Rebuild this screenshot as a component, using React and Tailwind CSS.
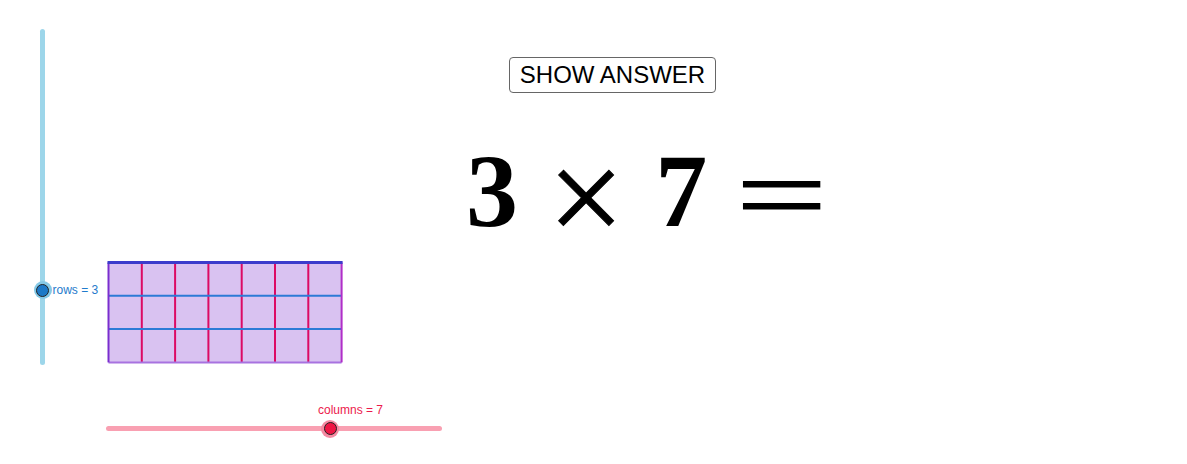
import React from "react";

const MIN = 1;
const MAX = 10;
const rows = 3;
const columns = 7;
const TRACK = 336;

// fraction of the track taken up by a slider value
const frac = (v) => (v - MIN) / (MAX - MIN);

function ArrayModel({ cols, rws }) {
  const x0 = 1.5;
  const y0 = 1.5;
  const cw = 33.3;
  const ch = 33.3;
  const w = cw * cols;
  const h = ch * rws;
  return (
    <svg width="238" height="106" viewBox="0 0 238 106" className="block">
      <rect x={x0} y={y0} width={w} height={h} fill="#d9c2f1" />
      {Array.from({ length: cols - 1 }, (_, i) => (
        <line key={`v${i}`} x1={x0 + cw * (i + 1)} y1={y0} x2={x0 + cw * (i + 1)} y2={y0 + h} stroke="#dc0a64" strokeWidth="2" />
      ))}
      {Array.from({ length: rws - 1 }, (_, i) => (
        <line key={`h${i}`} x1={x0} y1={y0 + ch * (i + 1)} x2={x0 + w} y2={y0 + ch * (i + 1)} stroke="#2c7ad6" strokeWidth="2" />
      ))}
      <line x1={x0} y1={y0 + h} x2={x0 + w} y2={y0 + h} stroke="#a872e0" strokeWidth="2" />
      <line x1={x0 + w} y1={y0} x2={x0 + w} y2={y0 + h} stroke="#b02ec8" strokeWidth="2" />
      <line x1={x0} y1={y0} x2={x0} y2={y0 + h} stroke="#7a2ecf" strokeWidth="2" />
      <line x1={x0 - 1} y1={y0} x2={x0 + w + 1} y2={y0} stroke="#3c3ccc" strokeWidth="3" />
    </svg>
  );
}

function Knob({ fill, halo }) {
  return (
    <div className={`w-[18px] h-[18px] rounded-full flex items-center justify-center ${halo}`}>
      <div className={`w-[13px] h-[13px] rounded-full border border-[#222] ${fill}`} />
    </div>
  );
}

function RowsSlider() {
  const top = TRACK * (1 - frac(rows));
  return (
    <div className="relative w-[5px] h-[336px] rounded-full bg-[#9dd6ea]">
      <div className="absolute left-[-6.5px] flex items-center gap-[1px]" style={{ top: top - 9 }}>
        <Knob fill="bg-[#1d79c7]" halo="bg-[#86c9e6]" />
        <span className="text-[12px] leading-none text-[#1f7bcc] whitespace-nowrap">rows = {rows}</span>
      </div>
    </div>
  );
}

function ColumnsSlider() {
  const left = TRACK * frac(columns);
  return (
    <div className="relative w-[336px] h-[5px] rounded-full bg-[#f9a0b2]">
      <div className="absolute top-[-6.5px]" style={{ left: left - 9 }}>
        <Knob fill="bg-[#ee1644]" halo="bg-[#f58aa2]" />
        <span className="absolute left-[-3px] top-[-16px] text-[12px] leading-none text-[#ec1a4c] whitespace-nowrap">columns = {columns}</span>
      </div>
    </div>
  );
}

export default function App() {
  return (
    <div className="relative w-[1187px] h-[464px] bg-white overflow-hidden font-['Liberation_Sans',Arial,sans-serif]">
      <div className="absolute left-[40px] top-[29px]">
        <RowsSlider />
      </div>

      <div className="absolute left-[107px] top-[261px]">
        <ArrayModel cols={columns} rws={rows} />
      </div>

      <div className="absolute left-[106px] top-[426px]">
        <ColumnsSlider />
      </div>

      <button className="absolute left-[509px] top-[57px] w-[207px] h-[36px] border border-[#666] rounded-[4px] bg-white text-[24px] leading-none text-black">
        SHOW ANSWER
      </button>

      <div className="absolute left-[466px] top-[113px] flex items-baseline font-['Liberation_Serif','Times_New_Roman',serif] text-[104px] leading-none text-black">
        <span className="font-bold">3</span>
        <span className="ml-[30px] font-normal text-[135px] translate-y-[17px] [-webkit-text-stroke:1px_black]">×</span>
        <span className="ml-[31px] font-bold">7</span>
        <span className="ml-[38px] font-normal text-[130px] scale-x-[1.25] scale-y-[0.85] translate-y-[13px] [-webkit-text-stroke:1.4px_black]">=</span>
      </div>
    </div>
  );
}
